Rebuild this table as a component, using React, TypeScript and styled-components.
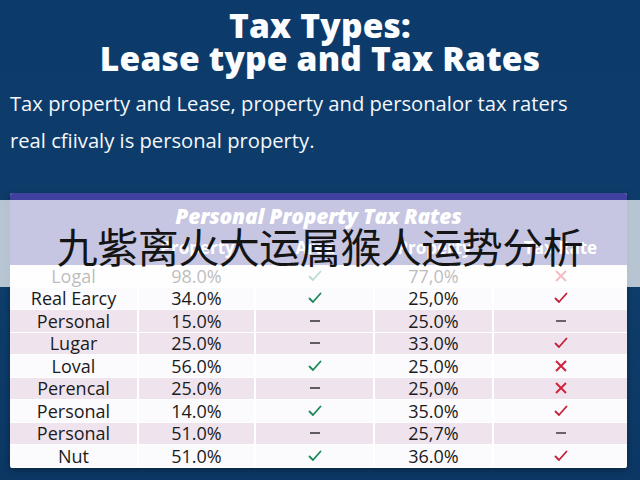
import React from "react";
import styled, { createGlobalStyle } from "styled-components";

const Global = createGlobalStyle`
  html, body { margin: 0; padding: 0; }
  body { background: #0d3b6a; width: 640px; height: 480px; overflow: hidden; }
`;

const Page = styled.div`
  position: relative;
  width: 640px;
  height: 480px;
  background: linear-gradient(180deg, #0c3b6b 0%, #0e3d6b 60%, #0c3764 100%);
  font-family: "Open Sans", "Liberation Sans", sans-serif;
  color: #fff;
  padding-top: 9px;
  box-sizing: border-box;
`;

const Title = styled.h1`
  margin: 0;
  font-family: "Open Sans", "Liberation Sans", sans-serif;
  font-weight: 800;
  font-size: 33.5px;
  line-height: 33px;
  text-align: center;
  letter-spacing: 0.2px;
  color: #fbfdff;
`;

const Lead = styled.p`
  margin: 10px 0 0 10px;
  font-size: 20.2px;
  line-height: 37px;
  font-weight: 400;
  color: #f4f7fb;
`;

const Card = styled.div`
  margin: 34px 13px 0 10px;
  border-radius: 3px;
  overflow: hidden;
  background: #fbfafc;
  box-shadow: 0 2px 6px rgba(0, 0, 0, 0.35);
`;

const Header = styled.div`
  height: 72px;
  background: #40409f;
  display: flex;
  flex-direction: column;
  align-items: center;
`;

const TableTitle = styled.div`
  margin-top: 10px;
  font-weight: 800;
  font-style: italic;
  font-size: 21px;
  line-height: 26px;
  color: #ffffff;
  letter-spacing: -0.2px;
`;

const Grid = styled.div`
  display: grid;
  grid-template-columns: 129px 117px 119px 119px 133px;
  width: 100%;
`;

const HeadCell = styled.div`
  height: 36px;
  display: flex;
  align-items: center;
  justify-content: center;
  font-weight: 700;
  font-size: 17px;
  color: #ffffff;
`;

const Cell = styled.div<{ $alt: boolean; $last: boolean }>`
  height: 22.5px;
  box-sizing: border-box;
  display: flex;
  align-items: center;
  justify-content: center;
  background: ${(p) => (p.$alt ? "#efe4ee" : "#fbfafc")};
  border-right: ${(p) => (p.$last ? "none" : "2px solid #ffffff")};
  border-bottom: 1px solid #ffffff;
  font-size: 18px;
  color: #1b1b1b;
`;

const Overlay = styled.div`
  position: absolute;
  left: 0;
  right: 0;
  top: 200px;
  height: 87px;
  background: rgba(255, 255, 255, 0.7);
  display: flex;
  align-items: center;
  justify-content: center;
  font-family: "Noto Sans CJK SC", "Noto Sans", sans-serif;
  font-size: 41px;
  font-weight: 400;
  color: #141414;
  letter-spacing: -0.5px;
  padding-top: 2px;
  box-sizing: border-box;
`;

type Mark = "check" | "redcheck" | "x" | "dash";

const MarkIcon = ({ kind }: { kind: Mark }) => {
  if (kind === "dash")
    return (
      <svg width="12" height="12" viewBox="0 0 12 12">
        <line x1="1" y1="6" x2="11" y2="6" stroke="#3b3b3b" strokeWidth="1.6" />
      </svg>
    );
  if (kind === "x")
    return (
      <svg width="14" height="14" viewBox="0 0 14 14">
        <path d="M2 2 L12 12 M12 2 L2 12" stroke="#d0233c" strokeWidth="2" fill="none" />
      </svg>
    );
  const color = kind === "check" ? "#1c8a58" : "#c4213b";
  return (
    <svg width="14" height="12" viewBox="0 0 14 12">
      <path d="M1.5 6.5 L5 10 L12.5 1.5" stroke={color} strokeWidth="1.8" fill="none" strokeLinecap="round" strokeLinejoin="round" />
    </svg>
  );
};

type Row = { name: string; a: string; b: Mark; c: string; d: Mark; alt: boolean };

const rows: Row[] = [
  { name: "Logal", a: "98.0%", b: "check", c: "77,0%", d: "x", alt: false },
  { name: "Real Earcy", a: "34.0%", b: "check", c: "25,0%", d: "redcheck", alt: false },
  { name: "Personal", a: "15.0%", b: "dash", c: "25.0%", d: "dash", alt: true },
  { name: "Lugar", a: "25.0%", b: "dash", c: "33.0%", d: "redcheck", alt: true },
  { name: "Loval", a: "56.0%", b: "check", c: "25.0%", d: "x", alt: false },
  { name: "Perencal", a: "25.0%", b: "dash", c: "25,0%", d: "x", alt: true },
  { name: "Personal", a: "14.0%", b: "check", c: "35.0%", d: "redcheck", alt: false },
  { name: "Personal", a: "51.0%", b: "dash", c: "25,7%", d: "dash", alt: true },
  { name: "Nut", a: "51.0%", b: "check", c: "36.0%", d: "redcheck", alt: false },
];

export default function App() {
  return (
    <>
      <Global />
      <Page>
        <Title>
          Tax Types:
          <br />
          Lease type and Tax Rates
        </Title>
        <Lead>
          Tax property and Lease, property and personalor tax raters
          <br />
          real cfiivaly is personal property.
        </Lead>
        <Card>
          <Header>
            <TableTitle>Personal Property Tax Rates</TableTitle>
            <Grid>
              <HeadCell></HeadCell>
              <HeadCell>Property</HeadCell>
              <HeadCell>Area</HeadCell>
              <HeadCell>Property</HeadCell>
              <HeadCell>Tax Rate</HeadCell>
            </Grid>
          </Header>
          <Grid>
            {rows.map((r, i) => (
              <React.Fragment key={i}>
                <Cell $alt={r.alt} $last={false}>{r.name}</Cell>
                <Cell $alt={r.alt} $last={false}>{r.a}</Cell>
                <Cell $alt={r.alt} $last={false}><MarkIcon kind={r.b} /></Cell>
                <Cell $alt={r.alt} $last={false}>{r.c}</Cell>
                <Cell $alt={r.alt} $last={true}><MarkIcon kind={r.d} /></Cell>
              </React.Fragment>
            ))}
          </Grid>
        </Card>
        <Overlay>九紫离火大运属猴人运势分析</Overlay>
      </Page>
    </>
  );
}
